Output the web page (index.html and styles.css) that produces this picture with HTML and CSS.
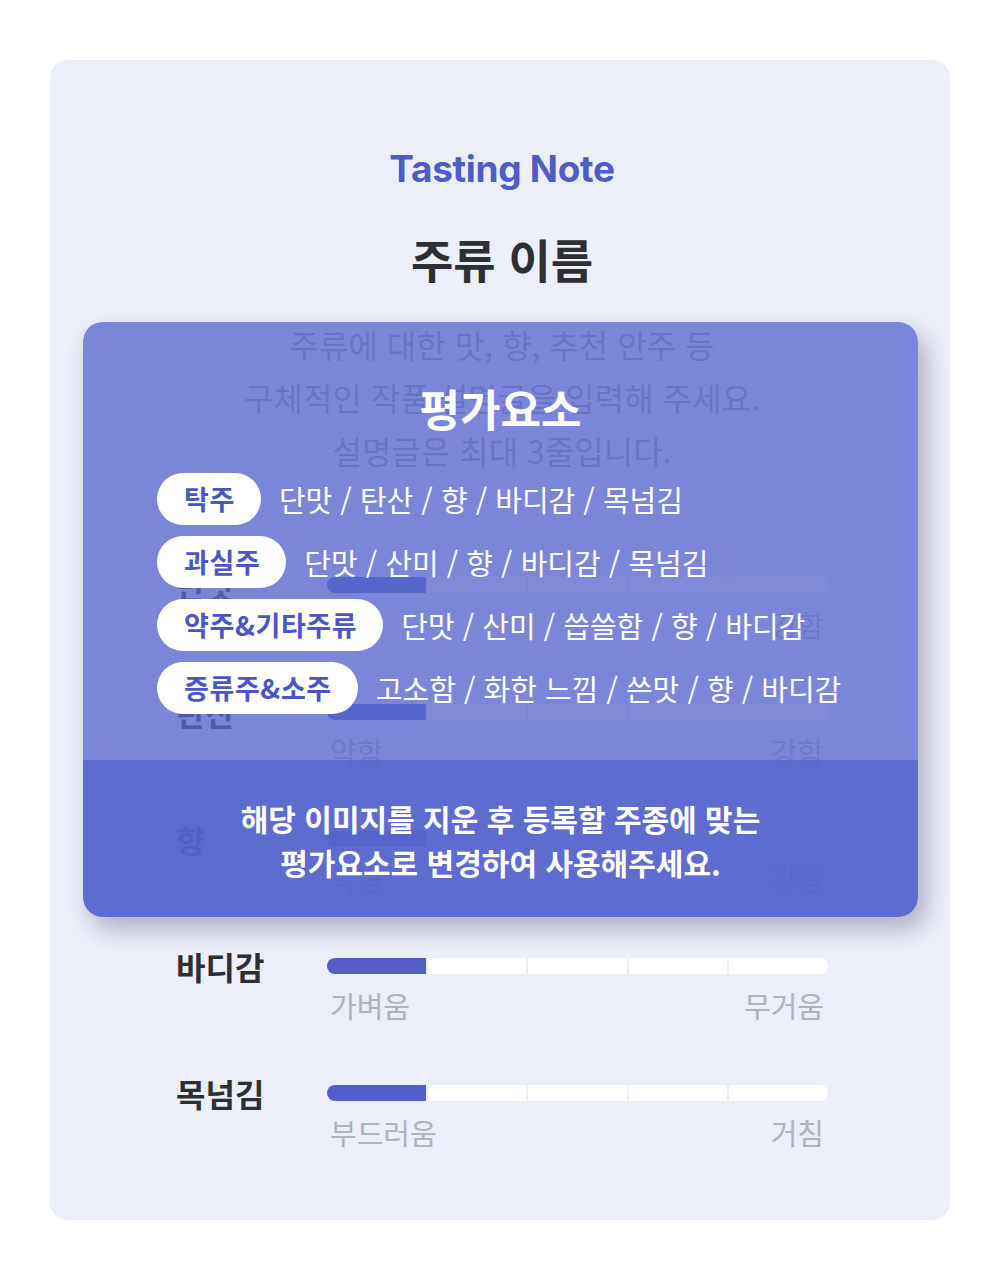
FILE: index.html
```html
<!DOCTYPE html>
<html lang="ko">
<head>
    <meta charset="UTF-8">
    <meta name="viewport" content="width=device-width,initial-scale=1">
    <title>Tasting Note</title>
    <link rel="stylesheet" href="styles.css">
</head>
<body>
<main class="note">
    <p class="brand">Tasting Note</p>
    <h1 class="title">주류 이름</h1>
    <p class="desc">주류에 대한 맛, 향, 추천 안주 등<br>구체적인 작품 설명글을 입력해 주세요.<br>설명글은 최대 3줄입니다.</p>

    <ul class="scales">
        <li class="scale">
            <span class="scale-name">단맛</span>
            <div class="track"><i class="on"></i><i></i><i></i><i></i><i></i></div>
            <div class="ends"><span>약함</span><span>강함</span></div>
        </li>
        <li class="scale">
            <span class="scale-name">탄산</span>
            <div class="track"><i class="on"></i><i></i><i></i><i></i><i></i></div>
            <div class="ends"><span>약함</span><span>강함</span></div>
        </li>
        <li class="scale">
            <span class="scale-name">향</span>
            <div class="track"><i class="on"></i><i></i><i></i><i></i><i></i></div>
            <div class="ends"><span>약함</span><span>강함</span></div>
        </li>
        <li class="scale">
            <span class="scale-name">바디감</span>
            <div class="track"><i class="on"></i><i></i><i></i><i></i><i></i></div>
            <div class="ends"><span>가벼움</span><span>무거움</span></div>
        </li>
        <li class="scale">
            <span class="scale-name">목넘김</span>
            <div class="track"><i class="on"></i><i></i><i></i><i></i><i></i></div>
            <div class="ends"><span>부드러움</span><span>거침</span></div>
        </li>
    </ul>

    <!-- 안내 레이어: 주종별 평가요소 -->
    <section class="guide">
        <div class="guide-body">
            <h2 class="guide-title">평가요소</h2>
            <ul class="kinds">
                <li><span class="pill">탁주</span>단맛 / 탄산 / 향 / 바디감 / 목넘김</li>
                <li><span class="pill">과실주</span>단맛 / 산미 / 향 / 바디감 / 목넘김</li>
                <li><span class="pill">약주&amp;기타주류</span>단맛 / 산미 / 씁쓸함 / 향 / 바디감</li>
                <li><span class="pill">증류주&amp;소주</span>고소함 / 화한 느낌 / 쓴맛 / 향 / 바디감</li>
            </ul>
        </div>
        <p class="guide-foot">해당 이미지를 지운 후 등록할 주종에 맞는<br>평가요소로 변경하여 사용해주세요.</p>
    </section>
</main>
</body>
</html>
```

FILE: styles.css
```css
* {
    margin: 0;
    padding: 0;
    box-sizing: border-box;
}

body {
    background: #fff;
    font-family: "Noto Sans CJK KR", "Noto Sans", sans-serif;
    color: #2e2f33;
}

ul {
    list-style: none;
}

.note {
    position: relative;
    width: 900px;
    height: 1160px;
    margin: 60px 50px;
    padding: 87px 122px 0 126px;
    background: #eceef9;
    border-radius: 18px;
    text-align: center;
}

.brand {
    font-family: Inter, "Noto Sans", sans-serif;
    font-weight: 700;
    font-size: 37px;
    line-height: 44px;
    letter-spacing: -0.3px;
    color: #4f5bc8;
}

.title {
    margin-top: 41px;
    font-size: 46px;
    line-height: 52px;
    font-weight: 700;
    color: #2e2f33;
}

.desc {
    margin-top: 34px;
    font-size: 32px;
    line-height: 53px;
    color: #9c9da8;
}

.scales {
    margin-top: 100px;
    display: flex;
    flex-direction: column;
    gap: 63px;
    text-align: left;
}

.scale {
    display: grid;
    grid-template-columns: 151px 1fr;
    grid-template-rows: 16px auto;
}

.scale-name {
    grid-row: 1;
    font-size: 32px;
    line-height: 16px;
    font-weight: 700;
    color: #2e2f33;
}

.track {
    grid-row: 1;
    grid-column: 2;
    display: flex;
    gap: 2px;
    height: 16px;
}

.track i {
    flex: 1;
    background: #fff;
}

.track i:first-child {
    border-radius: 8px 0 0 8px;
}

.track i:last-child {
    border-radius: 0 8px 8px 0;
}

.track i.on {
    background: #535ec9;
}

.ends {
    grid-row: 2;
    grid-column: 2;
    display: flex;
    justify-content: space-between;
    margin-top: 14px;
    padding: 0 4px 0 3px;
    font-size: 29px;
    line-height: 34px;
    color: #b0b2bc;
}

/* 안내 레이어 */
.guide {
    position: absolute;
    left: 33px;
    top: 262px;
    width: 835px;
    height: 595px;
    border-radius: 20px;
    overflow: hidden;
    box-shadow: 8px 12px 24px rgba(40, 44, 90, 0.32);
    display: flex;
    flex-direction: column;
    color: #fff;
}

.guide-body {
    height: 438px;
    padding: 62px 0 0 74px;
    background: rgba(90, 103, 205, 0.77);
}

.guide-title {
    padding-right: 74px;
    font-size: 44px;
    line-height: 48px;
    font-weight: 700;
    text-align: center;
}

.kinds {
    margin-top: 41px;
    display: flex;
    flex-direction: column;
    gap: 11px;
    text-align: left;
}

.kinds li {
    display: flex;
    align-items: center;
    gap: 18px;
    font-size: 29px;
    line-height: 52px;
}

.pill {
    height: 52px;
    padding: 0 26px 0 27px;
    border-radius: 26px;
    background: #fff;
    color: #4a56c4;
    font-size: 27px;
    font-weight: 700;
    line-height: 52px;
    letter-spacing: 0.6px;
}

.guide-foot {
    flex: 1;
    padding-top: 36px;
    background: rgba(86, 100, 204, 0.95);
    font-size: 30px;
    line-height: 44px;
    font-weight: 700;
    text-align: center;
}
```
